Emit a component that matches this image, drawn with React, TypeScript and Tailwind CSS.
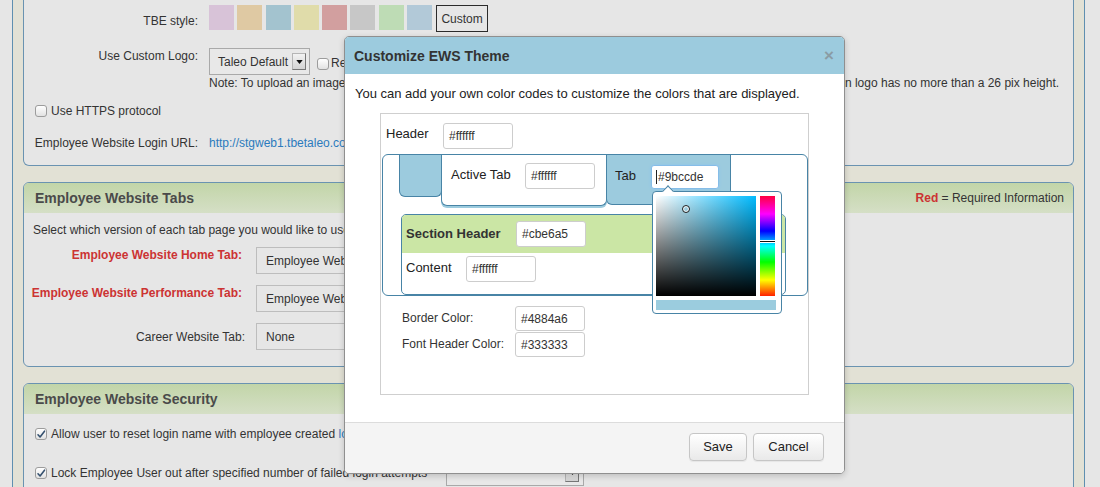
import React from "react";

const SWATCHES = [
  "#d8c3d8",
  "#dfc9a3",
  "#a3c3cf",
  "#e0dcaa",
  "#d29f9f",
  "#c7c7c7",
  "#bedcb5",
  "#b2c9d8",
];

function Checkbox({ checked = false }: { checked?: boolean }) {
  return (
    <span className="flex h-[12px] w-[12px] shrink-0 items-center justify-center rounded-[3px] border border-[#9c9c9c] bg-linear-to-b from-white to-[#e2e2e2]">
      {checked ? (
        <svg viewBox="0 0 12 12" className="h-[11px] w-[11px]">
          <path
            d="M2.4 6.3 L4.9 9 L10.2 2"
            fill="none"
            stroke="#35516f"
            strokeWidth="1.9"
            strokeLinecap="round"
            strokeLinejoin="round"
          />
        </svg>
      ) : null}
    </span>
  );
}

function ArrowButton() {
  return (
    <span className="flex h-[17px] w-[14px] items-center justify-center border border-[#b5b5b5] border-r-[#777] border-b-[#777] bg-linear-to-b from-[#f2f2f2] to-[#d4d4d4]">
      <svg viewBox="0 0 8 5" className="h-[4px] w-[7px]">
        <path d="M0 0 L8 0 L4 5 Z" fill="#111" />
      </svg>
    </span>
  );
}

function PageSelect({ value }: { value: string }) {
  return (
    <div className="flex h-[27px] w-[200px] shrink-0 items-center border border-[#bdbdbd] bg-[#e6e6e6] pl-[9px] whitespace-nowrap">
      {value}
    </div>
  );
}

function Hex({ value, w, h }: { value: string; w: string; h: string }) {
  return (
    <div
      className={`flex shrink-0 items-center rounded-[3px] border border-[#cdcdcd] bg-white pl-[5px] text-[12px] text-[#333] ${w} ${h}`}
    >
      {value}
    </div>
  );
}

function Background() {
  return (
    <div className="flex h-full">
      <div className="w-[12px] shrink-0" />
      <div className="w-[1073px] shrink-0 border-x border-[#5f8fb0] bg-[#e2e1d5] px-[10px]">
        {/* general settings */}
        <section className="h-[166px] rounded-b-[6px] border border-t-0 border-[#6a93b1] bg-[#e6e6e6]">
          <div className="flex items-start pt-[5px]">
            <div className="w-[174px] pt-[9px] text-right">TBE style:</div>
            <div className="ml-[11px] flex gap-[3.3px]">
              {SWATCHES.map((c) => (
                <span key={c} className="h-[25px] w-[25px]" style={{ background: c }} />
              ))}
            </div>
            <div className="ml-[4px] flex h-[27px] w-[52px] items-center justify-center border border-[#2b2b2b]">
              Custom
            </div>
          </div>

          <div className="mt-[16px] flex items-start">
            <div className="w-[174px] pt-[1px] text-right">Use Custom Logo:</div>
            <div className="ml-[11px] flex h-[27px] w-[101px] items-center border border-[#a9a9a9] bg-[#e8e8e8] pl-[8px] whitespace-nowrap">
              Taleo Default
              <span className="ml-auto mr-[3px]">
                <ArrowButton />
              </span>
            </div>
            <div className="ml-[7px] mt-[10px]">
              <Checkbox />
            </div>
            <div className="ml-[2px] mt-[8px] whitespace-nowrap">Remove custom logo</div>
          </div>

          <div className="ml-[185px] mt-[1px] whitespace-nowrap">
            Note: To upload an image, go to the Document Library, and attach the file. Please make sure that employee website login logo has no more than a 26 pix height.
          </div>

          <div className="ml-[11px] mt-[14px] flex items-center gap-[4px]">
            <Checkbox />
            <span>Use HTTPS protocol</span>
          </div>

          <div className="mt-[18px] flex items-start">
            <div className="w-[174px] text-right">Employee Website Login URL:</div>
            <a className="ml-[11px] text-[#2b7bbd]">http://stgweb1.tbetaleo.com/ews/login.jsp</a>
          </div>
        </section>

        {/* tabs */}
        <section className="mt-[16px] h-[185px] overflow-hidden rounded-[6px] border border-[#6a93b1] bg-[#e6e6e6]">
          <div className="flex h-[30px] items-center justify-between bg-linear-to-b from-[#c2d5a8] to-[#d5dfc6] pl-[11px] pr-[9px]">
            <span className="text-[14px] font-bold text-[#4a4a4a]">Employee Website Tabs</span>
            <span>
              <b className="text-[#cc3333]">Red</b> = Required Information
            </span>
          </div>
          <div className="pl-[9px] pt-[10px]">
            Select which version of each tab page you would like to use.
          </div>
          <div className="mt-[10px] flex items-start">
            <div className="w-[218px] pt-[1px] text-right font-bold text-[#cc3333]">
              Employee Website Home Tab:
            </div>
            <div className="ml-[14px]">
              <PageSelect value="Employee Website Home" />
            </div>
          </div>
          <div className="mt-[11px] flex items-start">
            <div className="w-[218px] pt-[1px] text-right font-bold text-[#cc3333]">
              Employee Website Performance Tab:
            </div>
            <div className="ml-[14px]">
              <PageSelect value="Employee Website Performance" />
            </div>
          </div>
          <div className="mt-[11px] flex items-start">
            <div className="w-[221px] pt-[7px] text-right">Career Website Tab:</div>
            <div className="ml-[11px]">
              <PageSelect value="None" />
            </div>
          </div>
        </section>

        {/* security */}
        <section className="mt-[16px] h-[200px] rounded-t-[6px] border border-[#6a93b1] bg-[#e6e6e6]">
          <div className="flex h-[30px] items-center rounded-t-[5px] bg-linear-to-b from-[#c2d5a8] to-[#d5dfc6] pl-[11px]">
            <span className="text-[14px] font-bold text-[#4a4a4a]">Employee Website Security</span>
          </div>
          <div className="ml-[11px] mt-[13px] flex items-center gap-[4px] whitespace-nowrap">
            <Checkbox checked />
            <span>
              Allow user to reset login name with employee created{" "}
              <a className="text-[#2b7bbd]">login name</a>
            </span>
          </div>
          <div className="ml-[11px] mt-[19px] flex items-center whitespace-nowrap">
            <Checkbox checked />
            <span className="ml-[4px]">
              Lock Employee User out after specified number of failed login attempts
            </span>
            <div className="ml-[19px] flex h-[26px] w-[138px] items-center border border-[#a9a9a9] bg-[#e8e8e8] pl-[8px]">
              <span className="ml-auto mr-[4px]">
                <ArrowButton />
              </span>
            </div>
          </div>
        </section>
      </div>
    </div>
  );
}

function ColorPicker() {
  return (
    <div className="absolute left-[271px] top-[77px] z-20 h-[123px] w-[130px] rounded-[4px] border border-[#4884a6] bg-white px-[3px] pt-[4px]">
      <span className="absolute -top-[5px] left-[11px] h-[8px] w-[8px] rotate-45 border-l border-t border-[#4884a6] bg-white" />
      <div className="flex gap-[4px]">
        <div className="relative h-[100px] w-[100px] bg-[linear-gradient(to_top,#000,transparent),linear-gradient(to_right,#fff,#00bbff)]">
          <span className="absolute left-[26px] top-[9px] h-[8px] w-[8px] rounded-full border-[1.5px] border-[#222] shadow-[inset_0_0_0_1px_#fff]" />
        </div>
        <div className="relative h-[100px] w-[15px] bg-[linear-gradient(to_bottom,#ff0040_0%,#ff00ff_18%,#0000ff_35%,#00ffff_50%,#00ff00_66%,#ffff00_84%,#ff2000_100%)]">
          <span className="absolute left-0 top-[44px] h-[3px] w-[15px] border-y border-white bg-[#111]" />
        </div>
      </div>
      <div className="mt-[4px] h-[10px] w-[120px] bg-[#9bccde]" />
    </div>
  );
}

function Preview() {
  return (
    <div className="relative ml-[25px] mt-[11px] h-[282px] w-[429px] border border-[#cfcfcf] text-[13px] leading-[16px] text-[#222]">
      <div className="flex items-start pl-[5px] pt-[9px]">
        <div className="mt-[3px] w-[57px]">Header</div>
        <Hex value="#ffffff" w="w-[70px]" h="h-[26px]" />
      </div>

      <div className="ml-[1px] mt-[5px] h-[142px] w-[426px] rounded-[6px] border border-[#4884a6]">
        <div className="ml-[16px] flex items-start">
          <div className="h-[42px] w-[43px] rounded-b-[6px] border-x border-b border-[#4884a6] bg-[#9ccbde]" />
          <div className="relative z-10 -ml-px flex h-[51px] w-[166px] items-start rounded-b-[6px] border-x border-b border-[#4884a6] bg-white pl-[9px] pt-[8px] shadow-[0_2px_0_#9ccbde]">
            <div className="mt-[4px] w-[74px]">Active Tab</div>
            <Hex value="#ffffff" w="w-[70px]" h="h-[26px]" />
          </div>
          <div className="-ml-px flex h-[50px] w-[125px] items-start rounded-b-[6px] border-x border-b border-[#4884a6] bg-[#9ccbde] pl-[8px] pt-[10px]">
            <div className="mt-[3px] w-[36px]">Tab</div>
            <div className="flex h-[24px] w-[68px] items-center rounded-[3px] border border-[#86bde8] bg-white pl-[4px] text-[12px] text-[#333] shadow-[0_0_3px_#8cc4f0]">
              <span className="mr-px h-[14px] w-px bg-[#222]" />
              #9bccde
            </div>
          </div>
        </div>

        <div className="ml-[18px] mt-[8px] h-[81px] w-[385px] overflow-hidden rounded-[5px] border border-[#4884a6]">
          <div className="flex h-[38px] items-center bg-[#cbe6a5] pl-[4px]">
            <div className="w-[110px] font-bold text-[#333]">Section Header</div>
            <Hex value="#cbe6a5" w="w-[70px]" h="h-[26px]" />
          </div>
          <div className="flex items-start pl-[4px] pt-[3px]">
            <div className="mt-[4px] w-[60px]">Content</div>
            <Hex value="#ffffff" w="w-[70px]" h="h-[26px]" />
          </div>
        </div>
      </div>

      <div className="ml-[21px] mt-[10px] flex items-start text-[12px] leading-[14px] text-[#333]">
        <div className="mt-[5px] w-[113px]">Border Color:</div>
        <Hex value="#4884a6" w="w-[70px]" h="h-[25px]" />
      </div>
      <div className="ml-[21px] mt-[1px] flex items-start text-[12px] leading-[14px] text-[#333]">
        <div className="mt-[5px] w-[113px]">Font Header Color:</div>
        <Hex value="#333333" w="w-[70px]" h="h-[25px]" />
      </div>

      <ColorPicker />
    </div>
  );
}

function Modal() {
  return (
    <div className="absolute left-[344px] top-[36px] h-[438px] w-[501px] overflow-hidden rounded-[5px] border border-[#8f8f8f] bg-white shadow-[0_2px_6px_rgba(0,0,0,0.18)]">
      <div className="flex h-[37px] items-center justify-between bg-[#9ccbde] pl-[9px] pr-[10px]">
        <span className="text-[14px] font-bold text-[#333]">Customize EWS Theme</span>
        <span className="text-[17px] font-bold leading-none text-[#8a9ca4]">×</span>
      </div>
      <div className="h-[348px] pl-[10px] pt-[12px]">
        <p className="text-[13px] leading-[16px] text-[#222]">
          You can add your own color codes to customize the colors that are displayed.
        </p>
        <Preview />
      </div>
      <div className="flex h-[51px] items-start justify-end gap-[6px] border-t border-[#dcdcdc] bg-[#f4f4f4] pr-[20px] pt-[10px] text-[13px] text-[#222]">
        <button className="h-[28px] w-[58px] rounded-[4px] border border-[#c6c6c6] bg-linear-to-b from-white to-[#e9e9e9] shadow-[0_1px_1px_rgba(0,0,0,0.06)]">
          Save
        </button>
        <button className="h-[28px] w-[71px] rounded-[4px] border border-[#c6c6c6] bg-linear-to-b from-white to-[#e9e9e9] shadow-[0_1px_1px_rgba(0,0,0,0.06)]">
          Cancel
        </button>
      </div>
    </div>
  );
}

export default function App() {
  return (
    <div className="relative h-[487px] w-[1100px] overflow-hidden bg-[#e6e6e6] font-['Liberation_Sans',Arial,sans-serif] text-[12px] leading-[14px] text-[#333]">
      <Background />
      <Modal />
    </div>
  );
}
